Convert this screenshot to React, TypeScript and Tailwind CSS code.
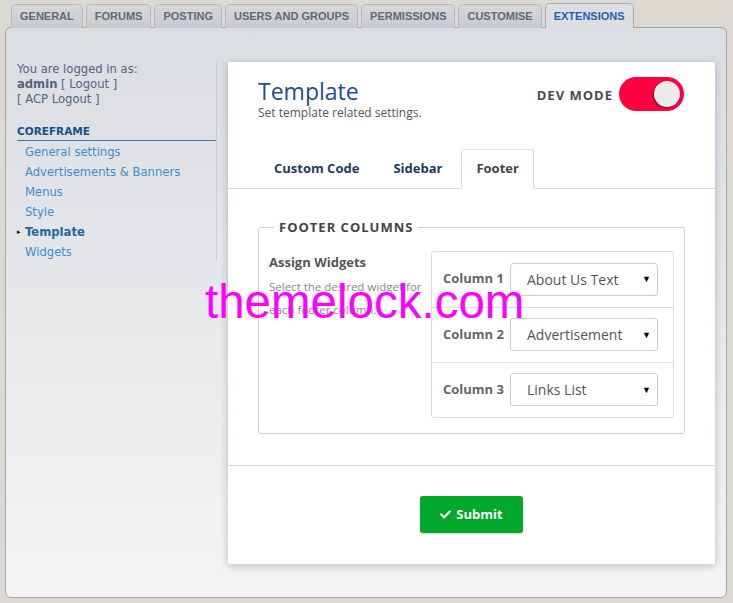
import { FaCheck } from 'react-icons/fa'

const topTabs = ['General', 'Forums', 'Posting', 'Users and groups', 'Permissions', 'Customise', 'Extensions']

const menu = ['General settings', 'Advertisements & Banners', 'Menus', 'Style', 'Template', 'Widgets']

const columns = [
  { label: 'Column 1', value: 'About Us Text' },
  { label: 'Column 2', value: 'Advertisement' },
  { label: 'Column 3', value: 'Links List' },
]

const App = () => {
  return (
    <div className="relative min-h-[603px] w-[733px] bg-[#dcd9d2] pt-[3px] font-['DejaVu_Sans',Verdana,sans-serif]">
      {/* top tabs */}
      <div className="relative z-10 -mb-px flex gap-[3px] pl-[11px]">
        {topTabs.map((t) => {
          const active = t === 'Extensions'
          return (
            <div
              key={t}
              className={
                active
                  ? "flex h-[25px] items-center rounded-t-[5px] border border-b-0 border-[#a9abae] bg-[#dcdfe2] px-[8px] font-['Liberation_Sans',Arial,sans-serif] text-[11px] font-bold uppercase text-[#1d63ad]"
                  : "flex h-[24px] items-center self-end rounded-t-[5px] border border-b-0 border-[#b9b9b9] bg-gradient-to-b from-[#d6d8dc] to-[#c8cacd] px-[8px] font-['Liberation_Sans',Arial,sans-serif] text-[11px] font-bold uppercase text-[#616975]"
              }
            >
              {t}
            </div>
          )
        })}
      </div>

      {/* main panel */}
      <div className="ml-[5px] flex h-[571px] w-[722px] gap-[11px] rounded-[6px] border border-[#a3a5a8] bg-gradient-to-b from-[#dadde1] to-[#f4f4f4] px-[11px] pt-[34px] pb-[34px]">
        {/* sidebar */}
        <div className="h-[198px] w-[200px] shrink-0 border-r border-[#c9cbce] text-[11.6px] leading-[15px] text-[#536482]">
          <div>You are logged in as:</div>
          <div>
            <b>admin</b> [ Logout ]
          </div>
          <div>[ ACP Logout ]</div>
          <div className="mt-[17px] border-b border-[#3e78a8] pb-[1px] text-[10.5px] font-bold text-[#14508f]">COREFRAME</div>
          <ul className="mt-[1px]">
            {menu.map((m) => (
              <li key={m} className="relative flex h-[20px] items-center pl-[8px]">
                {m === 'Template' && <span className="absolute left-0 text-[7px] text-black">▸</span>}
                <span className={m === 'Template' ? 'font-bold text-[#1e67a3]' : 'text-[#3d8ecf]'}>{m}</span>
              </li>
            ))}
          </ul>
        </div>

        {/* card */}
        <div className="flex h-[502px] w-[488px] flex-col bg-white font-['Open_Sans',sans-serif] shadow-[0_2px_8px_rgba(0,0,0,0.22)]">
          <div className="flex items-start justify-between pl-[30px] pr-[31px] pt-[14px]">
            <div>
              <h1 className="text-[23px] leading-[30px] text-[#1f4e8c]">Template</h1>
              <p className="text-[12px] leading-[14px] text-[#555]">Set template related settings.</p>
            </div>
            <div className="mt-[1px] flex items-center gap-[6px]">
              <span className="mt-[4px] text-[13px] font-bold tracking-[1px] text-[#4a4a4a]">DEV MODE</span>
              <div className="flex h-[34px] w-[65px] items-center justify-end rounded-full bg-[#ff0041] pr-[4px]">
                <div className="h-[26px] w-[26px] rounded-full bg-[#ebebeb] shadow-[-1px_1px_2px_rgba(0,0,0,0.45)]" />
              </div>
            </div>
          </div>

          {/* tabs */}
          <div className="mt-[29px] flex gap-[4px] border-b border-[#dcdcdc] pl-[31px]">
            <div className="flex h-[39px] items-center px-[15px] text-[13px] font-bold text-[#1f3b5c]">Custom Code</div>
            <div className="flex h-[39px] items-center px-[15px] text-[13px] font-bold text-[#1f3b5c]">Sidebar</div>
            <div className="-mb-px flex h-[40px] items-center rounded-t-[3px] border border-b-white border-[#dcdcdc] bg-white px-[14px] text-[13px] font-bold text-[#444]">
              Footer
            </div>
          </div>

          <div className="px-[30px] pt-[29px]">
            <fieldset className="rounded-[3px] border border-[#cfcfcf] pr-[10px] pl-[10px] pb-[15px]">
              <legend className="ml-[5px] px-[5px] text-[13px] font-bold tracking-[1px] text-[#444]">FOOTER COLUMNS</legend>
              <div className="mt-[13px] flex">
                <div className="w-[162px] shrink-0 pt-[2px]">
                  <div className="text-[13px] font-bold leading-[18px] text-[#555]">Assign Widgets</div>
                  <p className="mt-[4px] text-[11.5px] leading-[23px] text-[#888]">Select the desired widget for each footer column.</p>
                </div>
                <div className="flex-1 rounded-[3px] border border-[#dcdcdc]">
                  {columns.map((c, i) => (
                    <div
                      key={c.label}
                      className={`flex h-[55px] items-center pl-[11px] pr-[15px] ${i > 0 ? 'border-t border-[#dcdcdc]' : ''}`}
                    >
                      <span className="w-[67px] text-[13px] font-bold text-[#666]">{c.label}</span>
                      <div className="flex h-[33px] w-[148px] items-center justify-between rounded-[3px] border border-[#cccccc] pl-[16px] pr-[6px]">
                        <span className="text-[14px] text-[#555]">{c.value}</span>
                        <span className="text-[9px] text-black">▼</span>
                      </div>
                    </div>
                  ))}
                </div>
              </div>
            </fieldset>
          </div>

          <div className="mt-auto flex justify-center border-t border-[#d6d6d6] pt-[30px] pb-[31px]">
            <button className="flex h-[37px] w-[103px] items-center justify-center gap-[5px] rounded-[3px] bg-[#00a82c] text-[13px] font-bold text-white shadow-[0_1px_2px_rgba(0,0,0,0.2)]">
              <FaCheck className="h-[11px] w-[11px]" />
              Submit
            </button>
          </div>
        </div>
      </div>

      {/* watermark */}
      <div className="pointer-events-none absolute left-[205px] top-[278px] font-['Liberation_Sans',Arial,sans-serif] text-[47.5px] leading-[48px] text-[#ff00ff]">
        themelock.com
      </div>
    </div>
  )
}

export default App
